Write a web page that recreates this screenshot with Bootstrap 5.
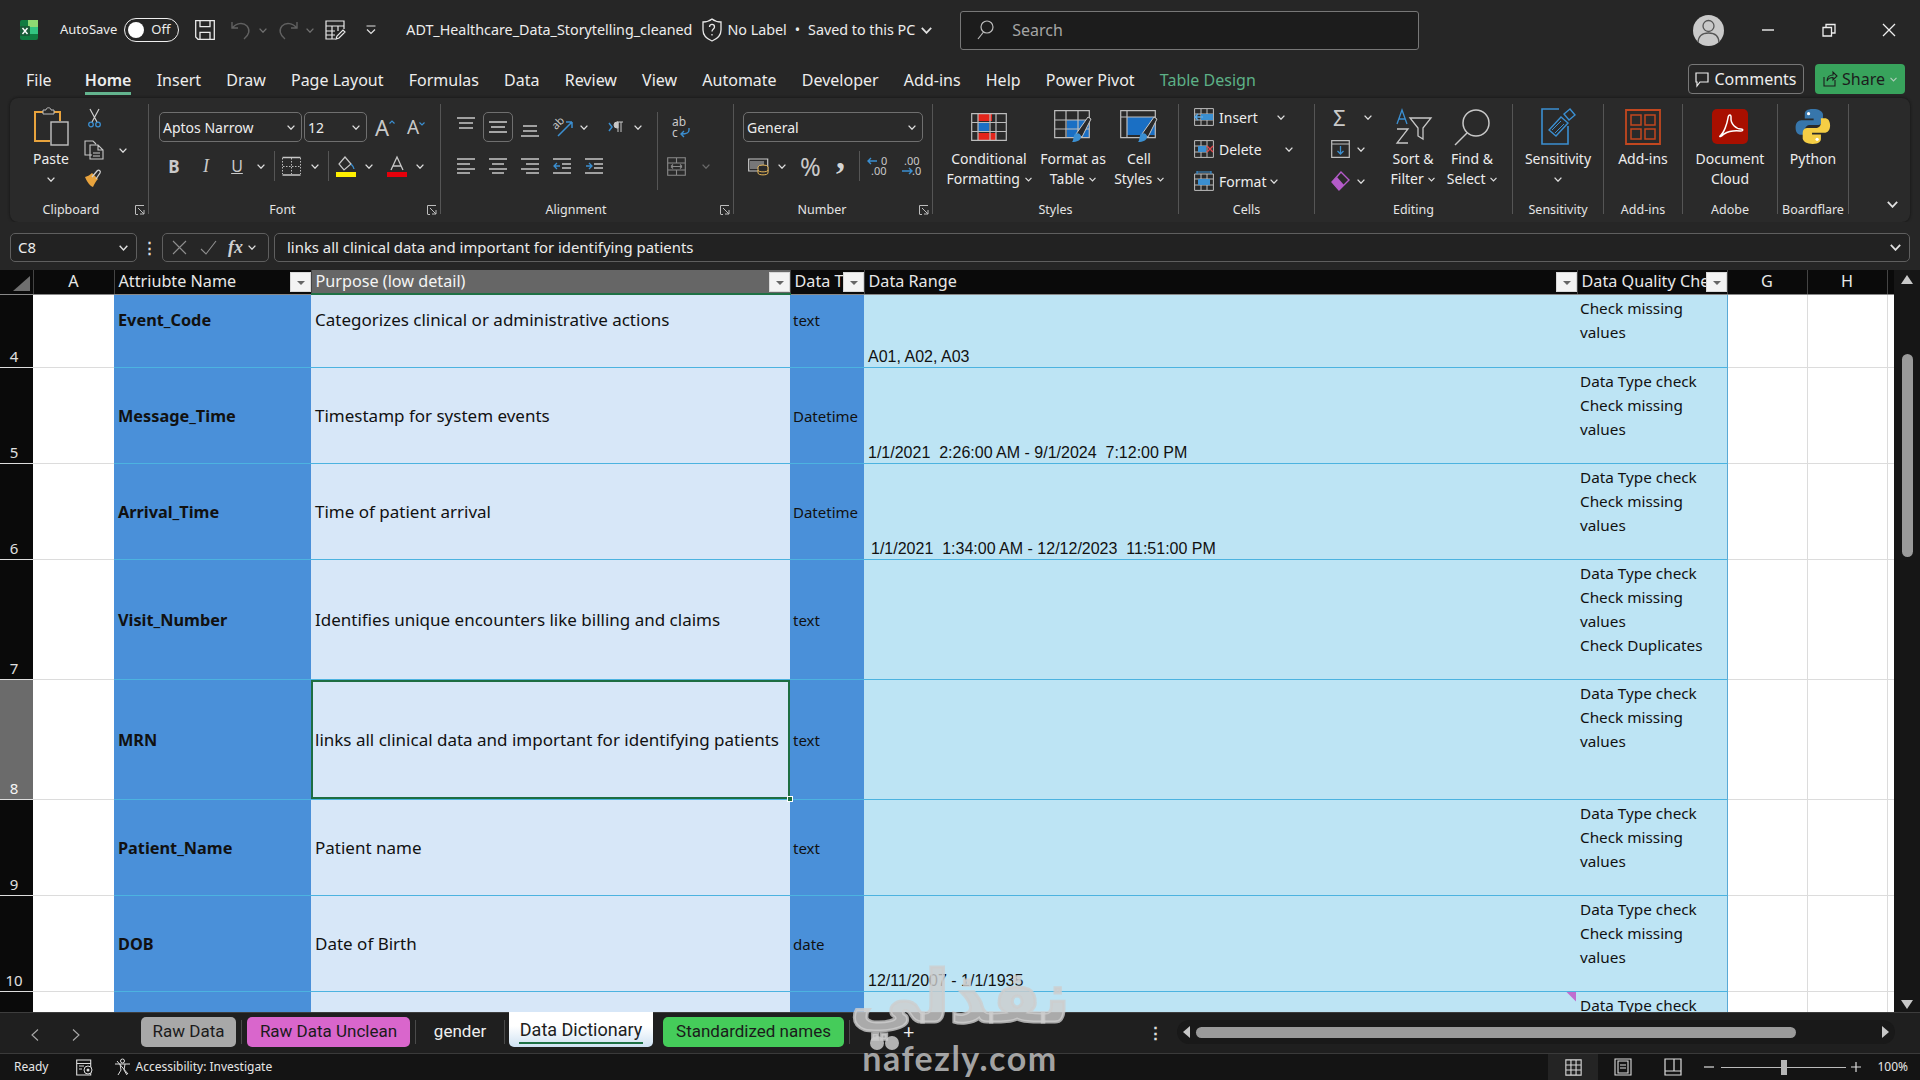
<!DOCTYPE html>
<html lang="en">
<head>
<meta charset="utf-8">
<title>ADT_Healthcare_Data_Storytelling_cleaned - Excel</title>
<link href="https://cdn.jsdelivr.net/npm/bootstrap@5.3.3/dist/css/bootstrap.min.css" rel="stylesheet">
<style>
html, body { height: 1080px; overflow: hidden; background: #262626; }
body { font-family: "Noto Sans", "Liberation Sans", sans-serif; color: #ededed; font-size: 14px; }
svg { flex: none; display: block; overflow: visible; }
.xl-app { width: 1920px; height: 1080px; position: relative; overflow: hidden; }

/* spacing helpers for the ribbon, values read off the picture */
.ml1{margin-left:1px}.ml2{margin-left:2px}.ml3{margin-left:3px}.ml4{margin-left:4px}.ml5{margin-left:5px}.ml6{margin-left:6px}.ml7{margin-left:7px}.ml8{margin-left:8px}.ml9{margin-left:9px}.ml10{margin-left:10px}.ml11{margin-left:11px}.ml12{margin-left:12px}.ml13{margin-left:13px}.ml14{margin-left:14px}.ml15{margin-left:15px}.ml16{margin-left:16px}.ml17{margin-left:17px}.ml18{margin-left:18px}.ml20{margin-left:20px}.ml22{margin-left:22px}.ml25{margin-left:25px}.ml28{margin-left:28px}.ml29{margin-left:29px}.ml31{margin-left:31px}.ml32{margin-left:32px}.ml33{margin-left:33px}.ml37{margin-left:37px}.ml46{margin-left:46px}.ml47{margin-left:47px}.ml61{margin-left:61px}.ml64{margin-left:64px}
.sl18{width:18px}.sl20{width:20px}.sl30{width:30px}

/* title bar */
.xl-title { height: 50px; padding-top: 10px; padding-right: 24px; background: #262626; font-size: 14.3px; white-space: nowrap; }
.xl-toggle { width: 55px; height: 24px; border: 1.5px solid #eee; border-radius: 12px; padding-left: 3px; gap: 7px; font-size: 13px; }
.xl-knob { width: 16px; height: 16px; border-radius: 50%; background: #fff; }
.xl-autosave { font-size: 13px; }
.xl-search { width: 459px; height: 39px; background: #1c1c1c; border: 1px solid #777; border-radius: 3px; padding-left: 16px; gap: 18px; color: #a5a5a5; font-size: 16px; }
.xl-avatar { width: 31px; height: 31px; border-radius: 50%; background: #c9c9c9; overflow: hidden; }

/* ribbon tabs */
.xl-tabs { height: 48px; font-size: 16px; white-space: nowrap; padding: 0 15px 0 26px; }
.xl-tab { position: relative; height: 48px; line-height: 60px; margin-right: 25.2px; }
.xl-tab-on { font-weight: 600; }
.xl-tab-on::after { content: ""; position: absolute; left: 0; right: 0; top: 42px; height: 3px; background: #63b48e; }
.xl-tab-green { color: #5db187; }
.xl-comments { width: 116px; height: 30px; border: 1px solid #777; border-radius: 4px; gap: 5px; font-size: 16px; margin-top: 14px; }
.xl-share { width: 90px; height: 30px; background: #38a35c; border-radius: 4px; gap: 5px; font-size: 16px; margin-top: 14px; color: #1c1c1c; }

/* ribbon */
.xl-ribbon { height: 124px; margin: 0 10px; width: 1900px; background: #2a2a2a; border-radius: 8px; padding-top: 6px; box-shadow: 0 0 3px #111; }
.rgroup { height: 110px; border-right: 1px solid #555; flex: none; }
.rbody { height: 98px; display: flow-root; }
.rlabel { height: 12px; line-height: 16px; font-size: 12.5px; text-align: center; color: #e4e4e4; white-space: nowrap; position: relative; }
.rlabel-16 { padding-right: 16px; }
.rlabel-22 { padding-right: 22px; }
.rlabel-24 { padding-right: 24px; }
.rlaunch { position: absolute; right: 3px; top: 3px; }
.w139{width:139px}.w292{width:292px}.w293{width:293px}.w199{width:199px}.w246{width:246px}.w136{width:136px}.w198{width:198px}.w91{width:91px}.w79{width:79px}.w95{width:95px}.w71{width:71px}
.rrow1 { height: 30px; margin-top: 8px; }
.rrow2 { height: 30px; margin-top: 9px; }
.rcombo { height: 30px; border: 1px solid #6f6f6f; border-radius: 5px; padding: 0 6px 0 3px; font-size: 14px; flex: none; }
.rcombo-icon { padding: 0; }
.w143{width:143px}.w63{width:63px}.w180{width:180px}
.rtall { width: 1px; height: 78px; background: #555; align-self: flex-start; flex: none; }
.rglyph { text-align: center; color: #c9c9c9; line-height: 1; flex: none; }
.g-b { font-weight: 700; font-size: 17px; }
.g-i { font-style: italic; font-size: 18px; font-family: "Liberation Serif", serif; }
.g-u { text-decoration: underline; font-size: 16px; }
.g-a { font-size: 22px; }
.g-a2 { font-size: 19px; }
.g-pct { font-size: 25px; }
.g-com { font-size: 36px; font-weight: 700; font-family: "Liberation Serif", serif; margin-top: -20px; color: #d4d4d4; }
.g-sig { font-size: 22px; }
.rwrap { font-size: 12px; line-height: 11px; color: #c9c9c9; width: 18px; }
.bigbtn { font-size: 14px; line-height: 20px; text-align: center; flex: none; white-space: nowrap; }
.bigico { height: 45px; }
.bigbtn svg.xl-inl { display: inline-block; vertical-align: 2px; margin-left: 1px; }
.w56{width:56px}.w90{width:90px}.w78{width:78px}.w54{width:54px}.w64{width:64px}.w66{width:66px}
.cellrows { gap: 6px; }
.cellrow { height: 26px; }
.sl58{width:58px}.sl51{width:51px}.sl66{width:66px}
.w100p { width: 100%; }
.rcollapse { margin: 0 12px 14px auto; }
.xl-svgtxt { font-family: "Noto Sans", sans-serif; fill: #c8c8c8; }

/* formula bar */
.xl-fbar { height: 48px; padding: 11px 10px 8px; background: #262626; font-size: 14.9px; }
.xl-namebox { width: 127px; height: 29px; border: 1px solid #5f5f5f; border-radius: 5px; padding: 0 8px 0 7px; background: #222; }
.xl-fxbox { width: 107px; height: 29px; border: 1px solid #5f5f5f; border-radius: 5px; margin-left: 25px; color: #8f8f8f; }
.xl-fx { font-family: "Liberation Serif", serif; font-style: italic; font-weight: 700; font-size: 18px; color: #d0d0d0; }
.xl-dots { width: 25px; text-align: center; font-weight: 700; color: #ddd; }
.xl-dots-f { margin-right: -25px; }
.xl-finput { width: 1636px; height: 29px; border: 1px solid #5f5f5f; border-radius: 5px; margin-left: 5px; padding: 0 8px 0 12px; background: #222; }

/* sheet */
.xl-sheet { height: 742px; background: #fff; }
.xl-gridwrap { width: 1894px; height: 742px; overflow: hidden; }
.xgrid { table-layout: fixed; width: 1894px; font-size: 17px; color: #111; }
.xgrid th { height: 23px; background: #0a0a0a; color: #e8e8e8; font-weight: 400; font-size: 16.2px; padding: 0 4px; position: relative; white-space: nowrap; overflow: hidden; border-right: 1px solid #444; border-bottom: 1px solid #888; line-height: 23px; }
.xgrid th.xc { text-align: center; }
.xgrid th.xsel { background: #666; border-bottom: 2px solid #1e7145; color: #f4f4f4; }
.xgrid td { padding: 0 4px; line-height: 24px; overflow: hidden; position: relative; white-space: nowrap; }
.xl-body { margin-top: -24px; }
.xgrid tr.r96 { height: 96px; } .xgrid tr.r120 { height: 120px; }
.xgrid td.c-rh { background: #0a0a0a; color: #e0e0e0; vertical-align: bottom; text-align: center; font-size: 15px; line-height: 22px; padding: 0 5px 0 0; border-bottom: 1px solid #ddd; }
.xgrid td.c-rh-on { background: #6b6b6b; color: #f5f5f5; }
.xgrid td.c-w { background: #fff; border-bottom: 1px solid #dcdcdc; border-right: 1px solid #dcdcdc; }
.xgrid td.c-a { border-right: 0; }
.xgrid td.c-b { background: #4a90d9; font-weight: 700; font-size: 16.3px; padding-top: 2px; border-bottom: 1px solid #4cb3e0; }
.xgrid td.c-c { background: #d7e7f8; padding-top: 2px; border-bottom: 1px solid #4cb3e0; }
.xgrid td.c-d { background: #4a90d9; font-size: 15px; padding: 2px 0 0 3px; border-bottom: 1px solid #4cb3e0; }
.xgrid td.c-e { background: #bde4f4; font-family: "Liberation Sans", sans-serif; vertical-align: bottom; font-size: 16px; line-height: 20px; border-bottom: 1px solid #4cb3e0; }
.xgrid td.c-f { background: #bde4f4; vertical-align: top; font-size: 15.3px; padding: 1px 3px 0; border-bottom: 1px solid #4cb3e0; border-right: 1px solid #5aa9d6; white-space: normal; }
.xgrid td.c-e.e-in { padding-left: 7px; }
.xgrid td.c-sel { box-shadow: inset 0 0 0 2px #1e6e42; overflow: visible; }
.xl-handle { position: absolute; right: -3px; bottom: -3px; width: 6px; height: 6px; background: #1e6e42; border: 1px solid #fff; z-index: 2; }
.xl-note { position: absolute; right: 1px; top: 0; width: 10px; height: 10px; background: #c06ed0; clip-path: polygon(0 0, 100% 0, 100% 100%); }
.xl-filter { position: absolute; right: 0; top: 2px; width: 21px; height: 20px; background: #f3f3f3; border: 1px solid #d8d8d8; }
.xl-filter::after { content: ""; position: absolute; left: 6px; top: 8px; border-left: 4px solid transparent; border-right: 4px solid transparent; border-top: 4px solid #666; }
.xl-corner { width: 0; height: 0; border-left: 17px solid transparent; border-bottom: 15px solid #6f6f6f; margin: 3px 0 0 13px; }
.xl-vscroll { width: 26px; height: 742px; background: #161616; padding-top: 5px; }
.xl-vthumb { width: 11px; height: 203px; background: #9a9a9a; border-radius: 6px; margin-top: 70px; margin-left: 8px; }
.xl-vdown { margin-top: 443px; margin-left: 7px; }
.xl-vup { margin-left: 7px; }

/* sheet tabs */
.xl-sheettabs { height: 41px; background: #1f1f1f; border-top: 1px solid #3d3d3d; font-size: 17px; font-family: Roboto, "Noto Sans", sans-serif; white-space: nowrap; }
.stab { height: 30px; margin-top: 4px; border-radius: 5px; color: #1b1b1b; flex: none; }
.stab-grey { width: 95px; background: #a8a8a8; }
.stab-pink { width: 163px; background: #d966cc; }
.stab-plain { width: 88px; color: #f0f0f0; }
.stab-on { width: 144px; height: 35px; margin-top: -1px; background: linear-gradient(#fff 40%, #cfe2f3); border-radius: 0 0 5px 5px; position: relative; padding-bottom: 1px; color: #202020; font-size: 18px; }
.stab-on::after { content: ""; position: absolute; left: 10px; right: 10px; top: 30px; height: 2px; background: #1e7145; }
.stab-green { width: 181px; background: #45cc5a; }
.ssep { width: 1px; height: 24px; background: #4a4a4a; margin-top: 7px; flex: none; }
.xl-hscroll { width: 718px; height: 24px; background: #191919; border-radius: 12px; margin: 7px 25px 0 9px; padding: 0 6px; }
.xl-hthumb { width: 600px; height: 11px; background: #9a9a9a; border-radius: 6px; margin-left: 6px; }

/* status bar */
.xl-status { height: 27px; background: #141414; border-top: 1px solid #3a3a3a; font-size: 12px; color: #e6e6e6; white-space: nowrap; padding: 0 12px 0 14px; }
.xl-viewon { width: 50px; height: 26px; background: #242424; }
.xl-slider { width: 125px; height: 1px; background: #bbb; position: relative; margin-left: 7px; }
.xl-slider::after { content: ""; position: absolute; left: 60px; top: -7px; width: 6px; height: 15px; background: #b5b5b5; }

/* watermark over the lower middle */
.xl-mark { position: absolute; left: 850px; top: 962px; width: 220px; text-align: center; pointer-events: none; z-index: 5; }
.xl-mark-ar { font-family: "DejaVu Sans", sans-serif; font-weight: 700; font-size: 72px; line-height: 70px; -webkit-text-stroke: 3px rgba(205,205,205,.8); color: rgba(205,205,205,.8); display: block; white-space: nowrap; }
.xl-mark-en { font-family: Lato, sans-serif; font-weight: 700; font-size: 34px; line-height: 34px; letter-spacing: 1.5px; color: rgba(190,190,190,.85); display: block; margin-top: 9px; }
.xl-mark-dots { position: absolute; left: 20px; top: 74px; gap: 1px; }
.xl-dot { width: 14px; height: 14px; border-radius: 50%; background: rgba(205,205,205,.85); }
.xl-plus { position: absolute; left: 903px; top: 1025px; color: #eee; font-size: 20px; line-height: 14px; z-index: 6; }
</style>
</head>
<body>
<svg width="0" height="0" class="position-absolute">
  <defs>
    <symbol id="ch" viewBox="0 0 8 5"><path d="M.6.6 4 4.2 7.4.6" fill="none" stroke="#e0e0e0" stroke-width="1.3"/></symbol>
    <symbol id="ldr" viewBox="0 0 10 10"><path d="M.5 9V.5H9M3 3l6 6M9 5v4H5M.5 9.5H3" fill="none" stroke="#bdbdbd"/></symbol>
    <symbol id="gridico" viewBox="0 0 20 20"><path d="M1 1h18v18H1zM1 7h18M1 13h18M7 1v18M13 1v18" fill="none" stroke="#d8d8d8" stroke-width="1.3"/></symbol>
    <path id="py" d="M12 1C8 1 6.8 2.4 6.8 4.2V7h5.6v1H4.8C2.4 8 1 9.8 1 12.6c0 3 1.4 4.6 3.4 4.6h2.4v-3c0-1.9 1.500-3.200 3.400-3.200h5.200c1.600 0 2.900-1.200 2.900-2.900V4.200C17.800 2.300 15.700 1 12 1z"/>
  </defs>
</svg>

<div class="xl-app d-flex flex-column">

  <!-- title bar -->
  <div class="xl-title d-flex align-items-center">
    <svg class="ml20" width="18" height="20" viewBox="0 0 18 20"><rect width="18" height="20" rx="2" fill="#107c41"/><rect x="8" width="10" height="7" fill="#8ed973"/><rect x="9" y="7" width="9" height="7" fill="#33c481"/><rect y="6" width="10" height="10" rx="1" fill="#185c37"/><path d="m2.5 8 5 6M7.5 8l-5 6" stroke="#fff" stroke-width="1.4"/></svg>
    <span class="xl-autosave ml22">AutoSave</span>
    <div class="xl-toggle d-flex align-items-center ml7"><span class="xl-knob"></span><span>Off</span></div>
    <svg class="ml16" width="20" height="20" viewBox="0 0 20 20"><path d="M.7.7h18.6v18.6H3L.7 17zM5 .7v6h10v-6M5 19.3v-7h10v7" fill="none" stroke="#e8e8e8" stroke-width="1.3"/></svg>
    <svg class="ml16" width="20" height="20" viewBox="0 0 20 20"><path d="M1 2v6h6M1.5 8C5 3 12 2 16 6c3.5 4 2 9-3 13" fill="none" stroke="#616161" stroke-width="1.4"/></svg>
    <svg class="ml8" width="8" height="5"><use href="#ch" opacity=".4"/></svg>
    <svg class="ml11" width="20" height="20" viewBox="0 0 20 20"><path d="M19 2v6h-6M18.5 8C15 3 8 2 4 6c-3.500 4-2 9 3 13" fill="none" stroke="#616161" stroke-width="1.4"/></svg>
    <svg class="ml8" width="8" height="5"><use href="#ch" opacity=".4"/></svg>
    <svg class="ml11" width="20" height="20" viewBox="0 0 20 20"><path d="M10 19H1V1h18v8M1 6h18M1 11h9M1 15h9M7 6v13M13 6v5M11 19l1-3 6-6 2 2-6 6z" fill="none" stroke="#e8e8e8" stroke-width="1.2"/></svg>
    <svg class="ml20" width="12" height="10" viewBox="0 0 12 10"><path d="M1.5 1h9M2 4.500l4 4 4-4" fill="none" stroke="#e0e0e0" stroke-width="1.2"/></svg>
    <span class="ml29">ADT_Healthcare_Data_Storytelling_cleaned</span>
    <svg class="ml10" width="20" height="24" viewBox="0 0 20 24"><path d="M10 1c2.5 2 5.5 3 9 3v8c0 5-4 9-9 11-5-2-9-6-9-11V4c3.500 0 6.500-1 9-3z" fill="none" stroke="#e8e8e8" stroke-width="1.3"/><path d="M7.5 9c0-3.500 5-3.500 5 0 0 2-2.500 2-2.500 4.500M10 16v1.500" fill="none" stroke="#e8e8e8" stroke-width="1.3"/></svg>
    <span class="ml5">No Label</span><span class="ml8">•</span><span class="ml8">Saved to this PC</span>
    <svg class="ml6" width="11" height="7"><use href="#ch"/></svg>
    <div class="xl-search d-flex align-items-center ml28">
      <svg width="17" height="20" viewBox="0 0 17 20"><circle cx="10" cy="7" r="6" fill="none" stroke="#bbb" stroke-width="1.2"/><path d="M6.5 12 1 19" stroke="#bbb" stroke-width="1.2"/></svg>
      <span>Search</span>
    </div>
    <div class="xl-avatar d-flex justify-content-center ms-auto">
      <svg width="31" height="31" viewBox="0 0 31 31"><circle cx="15.5" cy="11" r="5.5" fill="none" stroke="#555" stroke-width="1.3"/><path d="M5 28c0-7 4-10 10.500-10S26 21 26 28" fill="none" stroke="#555" stroke-width="1.3"/></svg>
    </div>
    <svg class="ml37" width="14" height="14" viewBox="0 0 14 14"><path d="M1 7h12" stroke="#eee" stroke-width="1.4"/></svg>
    <svg class="ml47" width="14" height="14" viewBox="0 0 14 14"><path d="M1 4.500h8.500V13H1zM4 4.500V1.500h9V10h-3.500" fill="none" stroke="#eee" stroke-width="1.3"/></svg>
    <svg class="ml46" width="14" height="14" viewBox="0 0 14 14"><path d="m1 1 12 12M13 1 1 13" stroke="#eee" stroke-width="1.3"/></svg>
  </div>

  <!-- ribbon tabs -->
  <div class="xl-tabs d-flex">
    <span class="xl-tab">File</span>
    <span class="xl-tab xl-tab-on ml8">Home</span>
    <span class="xl-tab">Insert</span>
    <span class="xl-tab">Draw</span>
    <span class="xl-tab">Page Layout</span>
    <span class="xl-tab">Formulas</span>
    <span class="xl-tab">Data</span>
    <span class="xl-tab">Review</span>
    <span class="xl-tab">View</span>
    <span class="xl-tab">Automate</span>
    <span class="xl-tab">Developer</span>
    <span class="xl-tab">Add-ins</span>
    <span class="xl-tab">Help</span>
    <span class="xl-tab">Power Pivot</span>
    <span class="xl-tab xl-tab-green">Table Design</span>
    <div class="xl-comments d-flex align-items-center justify-content-center ms-auto">
      <svg width="14" height="15" viewBox="0 0 14 15"><path d="M1 1h12v9H5l-3 4v-4H1z" fill="none" stroke="#eee" stroke-width="1.2"/></svg><span>Comments</span>
    </div>
    <div class="xl-share d-flex align-items-center justify-content-center ml11">
      <svg width="14" height="16" viewBox="0 0 14 16"><path d="M1 6v9h11V9M4 10c0-4 3-6 6-6V1l4 4-4 4V6.500c-3 0-5 1-6 3.500z" fill="none" stroke="#1c1c1c" stroke-width="1.1"/></svg><span>Share</span>
      <svg width="7" height="5"><use href="#ch" opacity=".7"/></svg>
    </div>
  </div>

  <!-- ribbon -->
  <div class="xl-ribbon d-flex">

    <!-- clipboard -->
    <div class="rgroup w139">
      <div class="rbody d-flex">
        <div class="bigbtn w56 ml13">
          <div class="bigico d-flex align-items-center justify-content-center">
            <svg width="34" height="39" viewBox="0 0 34 39"><path d="M8 5H1v29h15" fill="none" stroke="#e8a33d" stroke-width="2"/><path d="M8 5h18v9" fill="none" stroke="#e8a33d" stroke-width="2"/><path d="M9 6V3h3c0-3 5-3 5 0h3v4H9z" fill="#2a2a2a" stroke="#bdbdbd"/><rect x="17" y="15" width="17" height="23" fill="#2a2a2a" stroke="#c2c2c2" stroke-width="1.4"/></svg>
          </div>
          <div>Paste</div>
          <div class="d-flex justify-content-center mt-2"><svg width="8" height="5"><use href="#ch"/></svg></div>
        </div>
        <div class="d-flex flex-column ml5">
          <svg class="mt-1 ml4" width="13" height="20" viewBox="0 0 13 20"><path d="M2 1l7 13M11 1 4 14" stroke="#d0d0d0" stroke-width="1.2" fill="none"/><circle cx="3" cy="16.5" r="2.3" fill="none" stroke="#3b8fd1" stroke-width="1.3"/><circle cx="10" cy="16.5" r="2.3" fill="none" stroke="#3b8fd1" stroke-width="1.3"/></svg>
          <div class="d-flex align-items-center mt-2 pt-1">
            <svg width="20" height="20" viewBox="0 0 20 20"><path d="M8 15H1V1h8l3 3M6 5h8l5 5v9H6zM14 5v5h5M9 13h7M9 16h7" fill="#2a2a2a" stroke="#c8c8c8" stroke-width="1.1"/></svg>
            <svg class="ml15" width="8" height="5"><use href="#ch"/></svg>
          </div>
          <svg class="mt-2" width="20" height="20" viewBox="0 0 20 20"><path d="M1 9c3-1 5-2 7-4l6 6c-2 2-3 4-5 8-3-1-6-5-8-10z" fill="#e8a33d"/><path d="m8 9 5-6c2-2 4 0 3 2l-4 6" fill="none" stroke="#d0d0d0" stroke-width="1.3"/></svg>
        </div>
      </div>
      <div class="rlabel rlabel-16">Clipboard<svg class="rlaunch" width="10" height="10"><use href="#ldr"/></svg></div>
    </div>

    <!-- font -->
    <div class="rgroup w292">
      <div class="rbody">
        <div class="rrow1 d-flex align-items-center">
          <div class="rcombo w143 ml10 d-flex align-items-center justify-content-between"><span>Aptos Narrow</span><svg width="8" height="5"><use href="#ch"/></svg></div>
          <div class="rcombo w63 ml2 d-flex align-items-center justify-content-between"><span>12</span><svg width="8" height="5"><use href="#ch"/></svg></div>
          <div class="rglyph g-a ml8 d-flex"><span>A</span><svg class="mt-1" width="6" height="4" viewBox="0 0 6 4"><path d="M.5 3.5 3 1l2.500 2.500" fill="none" stroke="#3b8fd1" stroke-width="1.2"/></svg></div>
          <div class="rglyph g-a2 ml12 d-flex"><span>A</span><svg class="mt-1" width="6" height="4" viewBox="0 0 6 4"><path d="M.5.5 3 3 5.500.5" fill="none" stroke="#3b8fd1" stroke-width="1.2"/></svg></div>
        </div>
        <div class="rrow2 d-flex align-items-center">
          <span class="rglyph g-b sl20 ml15">B</span>
          <span class="rglyph g-i sl20 ml12">I</span>
          <span class="rglyph g-u sl20 ml11">U</span>
          <svg class="ml10" width="8" height="5"><use href="#ch"/></svg>
          <svg class="ml9" width="1" height="30"><rect width="1" height="30" fill="#555"/></svg>
          <svg class="ml7" width="19" height="19" viewBox="0 0 19 19"><path d="M.5.5h18M.5 18h18" stroke="#c8c8c8" stroke-width="1.6"/><path d="M.5 1v16M18.5 1v16M9.5 1v16M1 9.5h17" stroke="#bbb" stroke-dasharray="1.5 1.5"/></svg>
          <svg class="ml10" width="8" height="5"><use href="#ch"/></svg>
          <svg class="ml9" width="1" height="30"><rect width="1" height="30" fill="#555"/></svg>
          <svg class="ml7" width="20" height="21" viewBox="0 0 20 21"><path d="M9 1 3 8l5 6 7-6z" fill="none" stroke="#c8c8c8" stroke-width="1.2"/><path d="M15 8c1 1 3 3 3 5" fill="none" stroke="#3b8fd1" stroke-width="1.3"/><rect y="16" width="20" height="5" fill="#ffef00"/></svg>
          <svg class="ml9" width="8" height="5"><use href="#ch"/></svg>
          <svg class="ml14" width="20" height="21" viewBox="0 0 20 21"><path d="M4 14 10 1l6 13M6 10h8" fill="none" stroke="#c8c8c8" stroke-width="1.3"/><rect y="16" width="20" height="5" fill="#e6000b"/></svg>
          <svg class="ml9" width="8" height="5"><use href="#ch"/></svg>
        </div>
      </div>
      <div class="rlabel rlabel-24">Font<svg class="rlaunch" width="10" height="10"><use href="#ldr"/></svg></div>
    </div>

    <!-- alignment -->
    <div class="rgroup w293">
      <div class="rbody">
        <div class="rrow1 d-flex align-items-center">
          <svg class="ml16 mb-2" width="18" height="12" viewBox="0 0 18 12"><path d="M0 1h18M2 6h14M2 11h14" stroke="#c8c8c8" stroke-width="1.6"/></svg>
          <div class="ml8 sl30 d-flex align-items-center justify-content-center rcombo rcombo-icon">
            <svg width="18" height="12" viewBox="0 0 18 12"><path d="M0 1h18M2 6h14M0 11h18" stroke="#d0d0d0" stroke-width="1.6"/></svg>
          </div>
          <svg class="ml8 mt-2" width="18" height="12" viewBox="0 0 18 12"><path d="M2 1h14M2 6h14M0 11h18" stroke="#c8c8c8" stroke-width="1.6"/></svg>
          <svg class="ml13" width="21" height="22" viewBox="0 0 21 22"><text class="xl-svgtxt" x="0" y="11" font-size="11" transform="rotate(-45 6 8)">ab</text><path d="M6 20 20 6M20 6h-6M20 6v6" fill="none" stroke="#3b8fd1" stroke-width="1.5"/></svg>
          <svg class="ml7" width="8" height="5"><use href="#ch"/></svg>
          <svg class="ml20" width="15" height="12" viewBox="0 0 15 12"><path d="m1 2 3 4-3 4" fill="none" stroke="#3b8fd1" stroke-width="1.5"/><path d="M10 1H9a2.500 2.500 0 0 0 0 6h1zM10 1v10M13 1v10M9 1h6" fill="#c8c8c8" stroke="#c8c8c8"/></svg>
          <svg class="ml11" width="8" height="5"><use href="#ch"/></svg>
          <div class="rtall ml15"></div>
          <div class="rwrap ml14 d-flex flex-column">
            <span>ab</span>
            <span class="d-flex align-items-center">c<svg class="ml1" width="11" height="10" viewBox="0 0 11 10"><path d="M10 0v2c0 3-2 4-8 4m3-3-3 3 3 3" fill="none" stroke="#3b8fd1" stroke-width="1.4"/></svg></span>
          </div>
        </div>
        <div class="rrow2 d-flex align-items-center">
          <svg class="ml16" width="18" height="16" viewBox="0 0 18 16"><path d="M0 1h18M0 6h13M0 11h18M0 15h13" stroke="#c8c8c8" stroke-width="1.4"/></svg>
          <svg class="ml14" width="18" height="16" viewBox="0 0 18 16"><path d="M0 1h18M3 6h12M0 11h18M3 15h12" stroke="#c8c8c8" stroke-width="1.4"/></svg>
          <svg class="ml14" width="18" height="16" viewBox="0 0 18 16"><path d="M0 1h18M5 6h13M0 11h18M5 15h13" stroke="#c8c8c8" stroke-width="1.4"/></svg>
          <svg class="ml14" width="18" height="16" viewBox="0 0 18 16"><path d="M0 1h18M9 6h9M9 10h9M0 15h18" stroke="#c8c8c8" stroke-width="1.4"/><path d="M7 8H1m3-3L1 8l3 3" fill="none" stroke="#3b8fd1" stroke-width="1.3"/></svg>
          <svg class="ml14" width="18" height="16" viewBox="0 0 18 16"><path d="M0 1h18M9 6h9M9 10h9M0 15h18" stroke="#c8c8c8" stroke-width="1.4"/><path d="M1 8h6M4 5l3 3-3 3" fill="none" stroke="#3b8fd1" stroke-width="1.3"/></svg>
          <svg class="ml64" width="19" height="19" viewBox="0 0 19 19"><path d="M.7.7h17.6v17.6H.7zM.7 6h17.6M.7 13h17.6M9.5 1v5M9.5 13v5M4 9.5h11M4 9.5l2-2M4 9.500l2 2M15 9.500l-2-2M15 9.500l-2 2" fill="none" stroke="#8a8a8a" stroke-width="1.1"/></svg>
          <svg class="ml16" width="8" height="5"><use href="#ch" opacity=".35"/></svg>
        </div>
      </div>
      <div class="rlabel rlabel-22">Alignment<svg class="rlaunch" width="10" height="10"><use href="#ldr"/></svg></div>
    </div>

    <!-- number -->
    <div class="rgroup w199">
      <div class="rbody">
        <div class="rrow1 d-flex align-items-center">
          <div class="rcombo w180 ml9 d-flex align-items-center justify-content-between"><span>General</span><svg width="8" height="5"><use href="#ch"/></svg></div>
        </div>
        <div class="rrow2 d-flex align-items-center">
          <svg class="ml14" width="21" height="20" viewBox="0 0 21 20"><path d="M.7 3h19v12H.7z" fill="none" stroke="#c8c8c8" stroke-width="1.2"/><path d="M2 5h14v8H2z" fill="#777"/><ellipse cx="15" cy="11" rx="5" ry="2" fill="#2a2a2a" stroke="#e8b85a"/><path d="M10 11v6c0 2.500 10 2.500 10 0v-6M10 14c0 2.500 10 2.500 10 0" fill="#2a2a2a" stroke="#e8b85a"/></svg>
          <svg class="ml9" width="8" height="5"><use href="#ch"/></svg>
          <span class="rglyph g-pct ml14 sl20">%</span>
          <span class="rglyph g-com ml16">,</span>
          <svg class="ml14" width="1" height="30"><rect width="1" height="30" fill="#555"/></svg>
          <svg class="ml7" width="21" height="20" viewBox="0 0 21 20"><path d="M10 5H1m3-3L1 5l3 3" fill="none" stroke="#3b8fd1" stroke-width="1.4"/><text class="xl-svgtxt" x="14" y="9" font-size="11">0</text><text class="xl-svgtxt" x="4" y="19" font-size="11">.00</text></svg>
          <svg class="ml13" width="21" height="20" viewBox="0 0 21 20"><text class="xl-svgtxt" x="3" y="9" font-size="11">.00</text><path d="M1 15h10m-3-3 3 3-3 3" fill="none" stroke="#3b8fd1" stroke-width="1.4"/><text class="xl-svgtxt" x="11" y="19" font-size="11">.0</text></svg>
        </div>
      </div>
      <div class="rlabel rlabel-22">Number<svg class="rlaunch" width="10" height="10"><use href="#ldr"/></svg></div>
    </div>

    <!-- styles -->
    <div class="rgroup w246">
      <div class="rbody d-flex">
        <div class="bigbtn w90 ml11">
          <div class="bigico d-flex align-items-center justify-content-center">
            <svg width="36" height="28" viewBox="0 0 36 28"><path d="M7 1h14v7H7zM7 20h18v7H7z" fill="#e3251b"/><path d="M7 10h11v8H7z" fill="#1a6fc4"/><path d="M.7.7h34.6v26.6H.7zM.7 9.500h34.600M.7 18.500h34.600M7 1v26M19 1v26M25 1v26" fill="none" stroke="#bdbdbd" stroke-width="1.2"/></svg>
          </div>
          <div>Conditional</div><div>Formatting <svg class="xl-inl" width="7" height="5"><use href="#ch"/></svg></div>
        </div>
        <div class="bigbtn w78">
          <div class="bigico d-flex align-items-center justify-content-center">
            <svg width="38" height="34" viewBox="0 0 38 34"><path d="M13 10h22v18H13z" fill="#1a6fc4"/><path d="M.7.7h34.6v27H.7zM.7 10h34.600M.7 19h34.600M12 1v27M24 1v27" fill="none" stroke="#bdbdbd" stroke-width="1.2"/><path d="m22 24 12-17 3 2-9 18z" fill="#2a2a2a" stroke="#c8c8c8"/><path d="M21 24c3-2 6 0 6 3s-4 5-9 5c2-2 1-6 3-8z" fill="#3b8fd1"/></svg>
          </div>
          <div>Format as</div><div>Table <svg class="xl-inl" width="7" height="5"><use href="#ch"/></svg></div>
        </div>
        <div class="bigbtn w54">
          <div class="bigico d-flex align-items-center justify-content-center">
            <svg width="38" height="34" viewBox="0 0 38 34"><path d="M7 7h28v18H7z" fill="#1a6fc4"/><path d="M.7.7h34.6v27H.7zM.7 7h34.600M7 1v27" fill="none" stroke="#bdbdbd" stroke-width="1.2"/><path d="m22 24 12-17 3 2-9 18z" fill="#2a2a2a" stroke="#c8c8c8"/><path d="M21 24c3-2 6 0 6 3s-4 5-9 5c2-2 1-6 3-8z" fill="#3b8fd1"/></svg>
          </div>
          <div>Cell</div><div>Styles <svg class="xl-inl" width="7" height="5"><use href="#ch"/></svg></div>
        </div>
      </div>
      <div class="rlabel">Styles</div>
    </div>

    <!-- cells -->
    <div class="rgroup w136">
      <div class="rbody d-flex flex-column cellrows">
        <div class="cellrow d-flex align-items-center">
          <svg class="ml15" width="20" height="18" viewBox="0 0 20 18"><path d="M.6.6h18.800v16.800H.6zM.6 6h18.800M.6 12h18.800M7 1v16M13 1v16" fill="none" stroke="#bdbdbd"/><path d="M7 6h12v6H7z" fill="#3b8fd1"/><path d="M9 9H1m3-3L1 9l3 3" fill="none" stroke="#5aa9e6" stroke-width="1.5"/></svg>
          <span class="ml5 sl58">Insert</span><svg width="8" height="5"><use href="#ch"/></svg>
        </div>
        <div class="cellrow d-flex align-items-center">
          <svg class="ml15" width="20" height="18" viewBox="0 0 20 18"><path d="M.6.6h18.800v16.800H.6zM.6 6h12M.6 12h12M7 1v16M13 1v16" fill="none" stroke="#bdbdbd"/><path d="M4 6h8v6H4z" fill="#3b8fd1"/><path d="m13 6 6 6M19 6l-6 6" stroke="#e0474c" stroke-width="1.4"/></svg>
          <span class="ml5 sl66">Delete</span><svg width="8" height="5"><use href="#ch"/></svg>
        </div>
        <div class="cellrow d-flex align-items-center">
          <svg class="ml15" width="20" height="20" viewBox="0 0 20 20"><path d="M.6 3h18.800v16.400H.6zM.6 8h18.800M.6 14h18.800M7 3v16M13 3v16" fill="none" stroke="#bdbdbd"/><path d="M4 8h12v6H4z" fill="#3b8fd1"/><path d="M3 1h14M3 0v3M17 0v3" stroke="#3b8fd1" stroke-width="1.2"/></svg>
          <span class="ml5 sl51">Format</span><svg width="8" height="5"><use href="#ch"/></svg>
        </div>
      </div>
      <div class="rlabel">Cells</div>
    </div>

    <!-- editing -->
    <div class="rgroup w198">
      <div class="rbody d-flex">
        <div class="w66 flex-shrink-0 d-flex flex-column cellrows">
          <div class="cellrow d-flex align-items-center">
            <span class="rglyph g-sig ml18">Σ</span><svg class="ml18" width="8" height="5"><use href="#ch"/></svg>
          </div>
          <div class="cellrow d-flex align-items-center">
            <svg class="ml16" width="19" height="18" viewBox="0 0 19 18"><path d="M.7.7h17.6v16.600H.7zM.7 4h17.600" fill="none" stroke="#bdbdbd" stroke-width="1.2"/><path d="M9.5 6v8m-3-3 3 3 3-3" fill="none" stroke="#3b8fd1" stroke-width="1.3"/></svg>
            <svg class="ml7" width="8" height="5"><use href="#ch"/></svg>
          </div>
          <div class="cellrow d-flex align-items-center">
            <svg class="ml16" width="19" height="20" viewBox="0 0 19 20"><path d="M10 1 1 11l7 8 10-10z" fill="none" stroke="#b45bc9" stroke-width="1.4"/><path d="m1 11 7 8 5-5-7-8z" fill="#b45bc9"/></svg>
            <svg class="ml7" width="8" height="5"><use href="#ch"/></svg>
          </div>
        </div>
        <div class="bigbtn w64">
          <div class="bigico d-flex align-items-center justify-content-center">
            <svg width="38" height="36" viewBox="0 0 38 36"><path d="M3 15 8 1l5 14M5 10h6" fill="none" stroke="#3b8fd1" stroke-width="1.3"/><path d="M3 20h11L3 34h11" fill="none" stroke="#c8c8c8" stroke-width="1.3"/><path d="M16 9h21l-8 10v11l-5-3v-8z" fill="none" stroke="#c8c8c8" stroke-width="1.3"/></svg>
          </div>
          <div>Sort &amp;</div><div>Filter <svg class="xl-inl" width="7" height="5"><use href="#ch"/></svg></div>
        </div>
        <div class="bigbtn w54">
          <div class="bigico d-flex align-items-center justify-content-center">
            <svg width="37" height="38" viewBox="0 0 37 38"><circle cx="22" cy="15" r="13" fill="none" stroke="#c8c8c8" stroke-width="1.5"/><path d="M13 25 1 37" stroke="#c8c8c8" stroke-width="1.5"/></svg>
          </div>
          <div>Find &amp;</div><div>Select <svg class="xl-inl" width="7" height="5"><use href="#ch"/></svg></div>
        </div>
      </div>
      <div class="rlabel">Editing</div>
    </div>

    <!-- sensitivity -->
    <div class="rgroup w91">
      <div class="rbody">
        <div class="bigbtn w100p">
          <div class="bigico d-flex align-items-center justify-content-center">
            <svg width="35" height="37" viewBox="0 0 35 37"><path d="M18 1H1v35h26V18" fill="none" stroke="#3b8fd1" stroke-width="1.6"/><path d="m8 22 12-13 7 6-12 13z" fill="#2a2a2a" stroke="#3b8fd1" stroke-width="1.4"/><path d="m23 6 6-5 5 6-6 5z" fill="#2a2a2a" stroke="#3b8fd1" stroke-width="1.4"/><path d="m11 22 9-9M14 25l9-9" stroke="#3b8fd1"/></svg>
          </div>
          <div>Sensitivity</div>
          <div class="d-flex justify-content-center mt-2"><svg width="8" height="5"><use href="#ch"/></svg></div>
        </div>
      </div>
      <div class="rlabel">Sensitivity</div>
    </div>

    <!-- add-ins -->
    <div class="rgroup w79">
      <div class="rbody">
        <div class="bigbtn w100p">
          <div class="bigico d-flex align-items-center justify-content-center">
            <svg width="36" height="36" viewBox="0 0 36 36"><path d="M1 1h34v34H1z" fill="none" stroke="#c2471f" stroke-width="1.8"/><path d="M6 6h10v10H6zM20 6h10v10H20zM6 20h10v10H6zM20 20h10v10H20z" fill="none" stroke="#c2471f" stroke-width="1.5"/></svg>
          </div>
          <div>Add-ins</div>
        </div>
      </div>
      <div class="rlabel">Add-ins</div>
    </div>

    <!-- adobe -->
    <div class="rgroup w95">
      <div class="rbody">
        <div class="bigbtn w100p">
          <div class="bigico d-flex align-items-center justify-content-center">
            <svg width="36" height="35" viewBox="0 0 36 35"><rect width="36" height="35" rx="5" fill="#a80f00"/><path d="M8 27c4-3 7-12 8-18 .5-4 3.500-4 3 0-.5 6 5 11 10 11 2.500 0 2.500 2.500-1 2-5-.5-11 0-16 3-3 3-5 3-4 2z" fill="none" stroke="#fff" stroke-width="1.5"/></svg>
          </div>
          <div>Document</div><div>Cloud</div>
        </div>
      </div>
      <div class="rlabel">Adobe</div>
    </div>

    <!-- boardflare -->
    <div class="rgroup w71">
      <div class="rbody">
        <div class="bigbtn w100p">
          <div class="bigico d-flex align-items-center justify-content-center">
            <svg width="38" height="39" viewBox="0 0 24 24"><use href="#py" fill="#3776ab"/><use href="#py" fill="#f5ce45" transform="rotate(180 11.900 12)"/><circle cx="9.200" cy="3.900" r="1" fill="#fff"/><circle cx="14.600" cy="20.100" r="1" fill="#fff"/></svg>
          </div>
          <div>Python</div>
        </div>
      </div>
      <div class="rlabel">Boardflare</div>
    </div>

    <svg class="rcollapse align-self-end" width="11" height="7"><use href="#ch"/></svg>
  </div>

  <!-- formula bar -->
  <div class="xl-fbar d-flex align-items-center">
    <div class="xl-namebox d-flex align-items-center justify-content-between"><span>C8</span><svg width="9" height="6"><use href="#ch"/></svg></div>
    <div class="xl-dots xl-dots-f">⋮</div>
    <div class="xl-fxbox d-flex align-items-center">
      <svg class="ml9" width="15" height="15" viewBox="0 0 15 15"><path d="m1 1 13 13M14 1 1 14" stroke="#8f8f8f" stroke-width="1.1"/></svg>
      <svg class="ml13" width="17" height="15" viewBox="0 0 17 15"><path d="m1 9 5 5L16 1" fill="none" stroke="#8f8f8f" stroke-width="1.1"/></svg>
      <span class="xl-fx ml11">fx</span>
      <svg class="ml5" width="8" height="5"><use href="#ch"/></svg>
    </div>
    <div class="xl-finput d-flex align-items-center justify-content-between">
      <span>links all clinical data and important for identifying patients</span>
      <svg width="11" height="7"><use href="#ch"/></svg>
    </div>
  </div>

  <!-- sheet -->
  <div class="xl-sheet d-flex">
    <div class="xl-gridwrap">
      <table class="xgrid">
        <colgroup>
          <col width="33"><col width="81"><col width="197"><col width="479"><col width="74"><col width="713"><col width="150"><col width="80"><col width="80"><col width="7">
        </colgroup>
        <tr>
          <th class="p-0"><div class="xl-corner"></div></th>
          <th class="xc">A</th>
          <th>Attriubte Name<span class="xl-filter"></span></th>
          <th class="xsel">Purpose (low detail)<span class="xl-filter"></span></th>
          <th>Data Type<span class="xl-filter"></span></th>
          <th>Data Range<span class="xl-filter"></span></th>
          <th>Data Quality Check<span class="xl-filter"></span></th>
          <th class="xc">G</th>
          <th class="xc">H</th>
          <th></th>
        </tr>
      </table>
      <div class="overflow-hidden">
      <table class="xgrid xl-body">
        <colgroup>
          <col width="33"><col width="81"><col width="197"><col width="479"><col width="74"><col width="713"><col width="150"><col width="80"><col width="80"><col width="7">
        </colgroup>
        <tr class="r96">
          <td class="c-rh">4</td><td class="c-w c-a"></td><td class="c-b">Event_Code</td><td class="c-c">Categorizes clinical or administrative actions</td><td class="c-d">text</td><td class="c-e">A01, A02, A03</td>
          <td class="c-f">Data Type check<br>Check missing<br>values</td><td class="c-w"></td><td class="c-w"></td><td class="c-w"></td>
        </tr>
        <tr class="r96">
          <td class="c-rh">5</td><td class="c-w c-a"></td><td class="c-b">Message_Time</td><td class="c-c">Timestamp for system events</td><td class="c-d">Datetime</td><td class="c-e">1/1/2021&nbsp; 2:26:00 AM - 9/1/2024&nbsp; 7:12:00 PM</td>
          <td class="c-f">Data Type check<br>Check missing<br>values</td><td class="c-w"></td><td class="c-w"></td><td class="c-w"></td>
        </tr>
        <tr class="r96">
          <td class="c-rh">6</td><td class="c-w c-a"></td><td class="c-b">Arrival_Time</td><td class="c-c">Time of patient arrival</td><td class="c-d">Datetime</td><td class="c-e e-in">1/1/2021&nbsp; 1:34:00 AM - 12/12/2023&nbsp; 11:51:00 PM</td>
          <td class="c-f">Data Type check<br>Check missing<br>values</td><td class="c-w"></td><td class="c-w"></td><td class="c-w"></td>
        </tr>
        <tr class="r120">
          <td class="c-rh">7</td><td class="c-w c-a"></td><td class="c-b">Visit_Number</td><td class="c-c">Identifies unique encounters like billing and claims</td><td class="c-d">text</td><td class="c-e"></td>
          <td class="c-f">Data Type check<br>Check missing<br>values<br>Check Duplicates</td><td class="c-w"></td><td class="c-w"></td><td class="c-w"></td>
        </tr>
        <tr class="r120">
          <td class="c-rh c-rh-on">8</td><td class="c-w c-a"></td><td class="c-b">MRN</td><td class="c-c c-sel">links all clinical data and important for identifying patients<span class="xl-handle"></span></td><td class="c-d">text</td><td class="c-e"></td>
          <td class="c-f">Data Type check<br>Check missing<br>values</td><td class="c-w"></td><td class="c-w"></td><td class="c-w"></td>
        </tr>
        <tr class="r96">
          <td class="c-rh">9</td><td class="c-w c-a"></td><td class="c-b">Patient_Name</td><td class="c-c">Patient name</td><td class="c-d">text</td><td class="c-e"></td>
          <td class="c-f">Data Type check<br>Check missing<br>values</td><td class="c-w"></td><td class="c-w"></td><td class="c-w"></td>
        </tr>
        <tr class="r96">
          <td class="c-rh">10</td><td class="c-w c-a"></td><td class="c-b">DOB</td><td class="c-c">Date of Birth</td><td class="c-d">date</td><td class="c-e">12/11/2007 - 1/1/1935</td>
          <td class="c-f">Data Type check<br>Check missing<br>values</td><td class="c-w"></td><td class="c-w"></td><td class="c-w"></td>
        </tr>
        <tr class="r96">
          <td class="c-rh"></td><td class="c-w c-a"></td><td class="c-b"></td><td class="c-c"></td><td class="c-d"></td><td class="c-e"><span class="xl-note"></span></td>
          <td class="c-f">Data Type check</td><td class="c-w"></td><td class="c-w"></td><td class="c-w"></td>
        </tr>
      </table>
      </div>
    </div>
    <div class="xl-vscroll">
      <svg class="xl-vup" width="12" height="9" viewBox="0 0 12 9"><path d="M6 0l6 9H0z" fill="#c8c8c8"/></svg>
      <div class="xl-vthumb"></div>
      <svg class="xl-vdown" width="12" height="9" viewBox="0 0 12 9"><path d="M6 9l6-9H0z" fill="#c8c8c8"/></svg>
    </div>
  </div>

  <!-- sheet tabs -->
  <div class="xl-sheettabs d-flex">
    <svg class="ml31 mt-3" width="8" height="12" viewBox="0 0 8 12"><path d="M7 .5 1 6l6 5.500" fill="none" stroke="#aaa" stroke-width="1.1"/></svg>
    <svg class="ml33 mt-3" width="8" height="12" viewBox="0 0 8 12"><path d="m1 .5 6 5.500-6 5.500" fill="none" stroke="#aaa" stroke-width="1.1"/></svg>
    <div class="stab stab-grey ml61 d-flex align-items-center justify-content-center">Raw Data</div>
    <div class="ssep ml5"></div>
    <div class="stab stab-pink ml5 d-flex align-items-center justify-content-center">Raw Data Unclean</div>
    <div class="ssep ml5"></div>
    <div class="stab stab-plain d-flex align-items-center justify-content-center">gender</div>
    <div class="ssep"></div>
    <div class="stab stab-on ml4 d-flex align-items-center justify-content-center">Data Dictionary</div>
    <div class="stab stab-green ml10 d-flex align-items-center justify-content-center">Standardized names</div>
    <div class="ssep ml5"></div>
    <span class="ms-auto xl-dots mt-2">⋮</span>
    <div class="xl-hscroll d-flex align-items-center">
      <svg width="7" height="12" viewBox="0 0 7 12"><path d="M7 0v12L0 6z" fill="#c8c8c8"/></svg>
      <div class="xl-hthumb"></div>
      <svg class="ms-auto" width="7" height="12" viewBox="0 0 7 12"><path d="M0 0v12l7-6z" fill="#c8c8c8"/></svg>
    </div>
  </div>

  <!-- status bar -->
  <div class="xl-status d-flex align-items-center">
    <span>Ready</span>
    <svg class="ml28" width="18" height="18" viewBox="0 0 18 18"><path d="M.7 2h14v15H.7zM.7 5.500h14M3 8h5M3 11h3" fill="none" stroke="#ddd" stroke-width="1.1"/><circle cx="12" cy="12" r="4" fill="#141414" stroke="#ddd"/><circle cx="12" cy="12" r="1.5" fill="#ddd"/></svg>
    <svg class="ml20" width="17" height="18" viewBox="0 0 17 18"><circle cx="8.5" cy="3" r="2" fill="none" stroke="#ddd"/><path d="M1 6h15M6 6l1 6-3 5M11 6l-1 6 3 5M3 3l11 13" fill="none" stroke="#ddd"/></svg>
    <span class="ml4">Accessibility: Investigate</span>
    <div class="xl-viewon d-flex align-items-center justify-content-center ms-auto">
      <svg width="17" height="17"><use href="#gridico"/></svg>
    </div>
    <svg class="ml16" width="18" height="18" viewBox="0 0 18 18"><path d="M1 1h16v16H1zM4 3h10v12H4zM6 7h6M6 10h6" fill="none" stroke="#ddd" stroke-width="1.1"/></svg>
    <svg class="ml32" width="18" height="18" viewBox="0 0 18 18"><path d="M1 1h16v16H1zM1 13h16M10 1v12" fill="none" stroke="#ddd" stroke-width="1.2"/></svg>
    <svg class="ml22" width="10" height="10" viewBox="0 0 10 10"><path d="M0 5h10" stroke="#ddd" stroke-width="1.2"/></svg>
    <div class="xl-slider"></div>
    <svg class="ml5" width="10" height="10" viewBox="0 0 10 10"><path d="M0 5h10M5 0v10" stroke="#ddd" stroke-width="1.2"/></svg>
    <span class="ml16">100%</span>
  </div>

  <!-- watermark -->
  <div class="xl-mark">
    <span class="xl-mark-ar" lang="ar" dir="rtl">نفذلي</span>
    <div class="xl-mark-dots d-flex"><span class="xl-dot"></span><span class="xl-dot"></span></div>
    <span class="xl-mark-en">nafezly.com</span>
  </div>
  <span class="xl-plus">+</span>

</div>
<script src="https://cdn.jsdelivr.net/npm/bootstrap@5.3.3/dist/js/bootstrap.bundle.min.js"></script>
</body>
</html>
